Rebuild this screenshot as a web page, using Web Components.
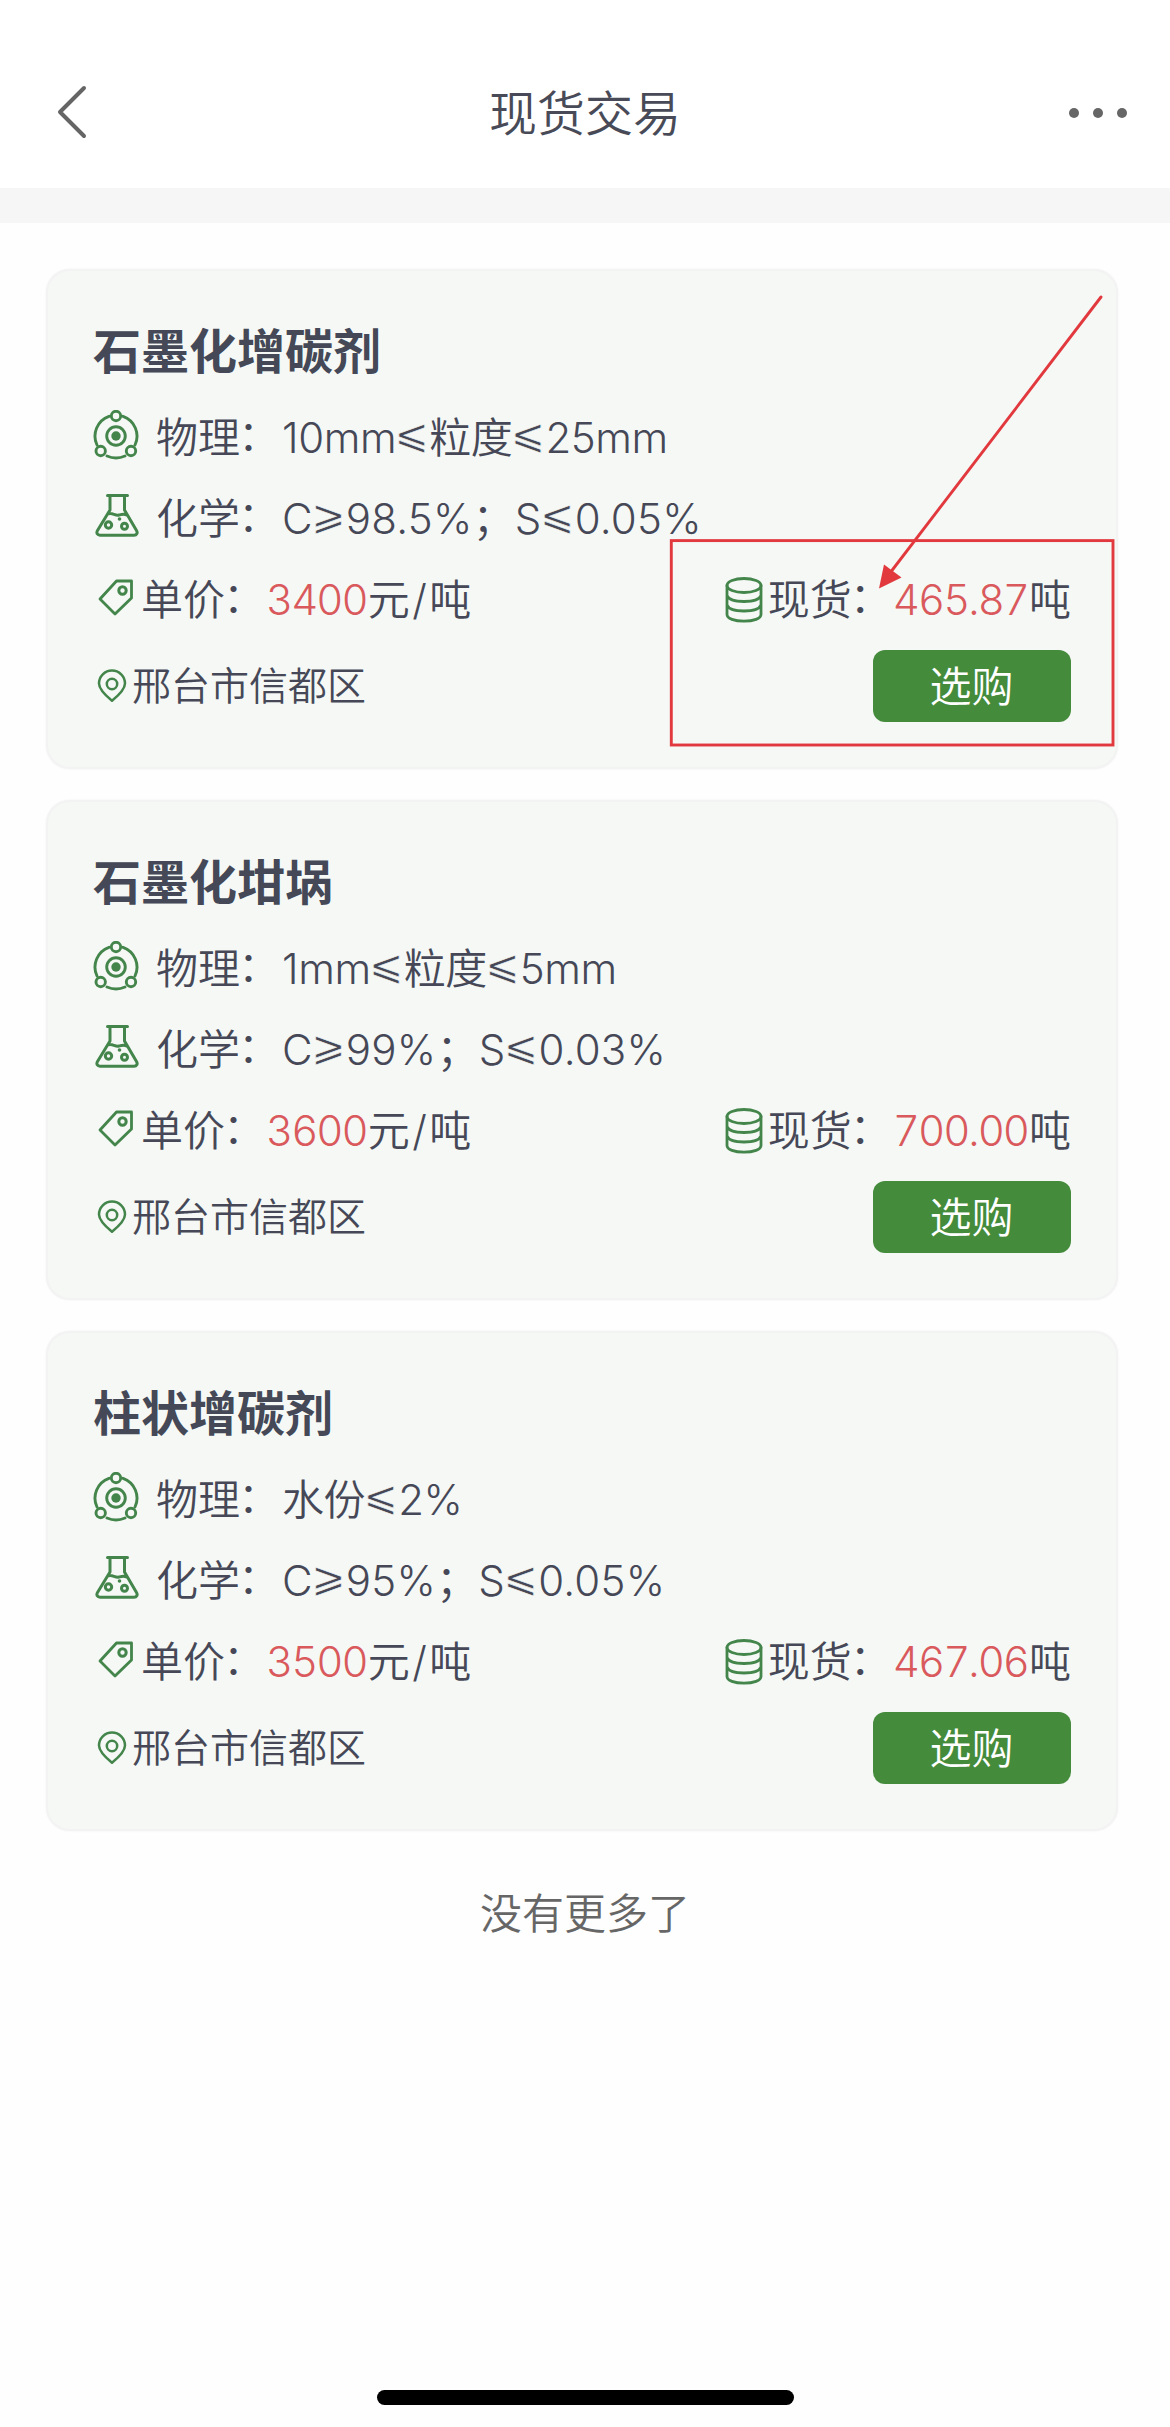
<!DOCTYPE html>
<html lang="zh-CN">
<head>
<meta charset="utf-8">
<title>现货交易</title>
<style>
html,body{margin:0;padding:0;background:#fefefe}
body{font-family:Inter,"Noto Sans CJK SC",sans-serif;font-weight:350;color:#464857}
</style>
</head>
<body>
<spot-page>
  <spot-header slot="header">现货交易</spot-header>
  <product-card price="3400" stock="465.87" place="邢台市信都区">
    <span slot="name">石墨化增碳剂</span>
    <span slot="physical">10mm<le-sign>⩽</le-sign>粒度<le-sign>⩽</le-sign>25mm</span>
    <span slot="chemical">C<le-sign>⩾</le-sign>98.5%；S<le-sign>⩽</le-sign>0.05%</span>
    <stock-callout slot="callout"></stock-callout>
  </product-card>
  <product-card price="3600" stock="700.00" place="邢台市信都区">
    <span slot="name">石墨化坩埚</span>
    <span slot="physical">1mm<le-sign>⩽</le-sign>粒度<le-sign>⩽</le-sign>5mm</span>
    <span slot="chemical">C<le-sign>⩾</le-sign>99%；S<le-sign>⩽</le-sign>0.03%</span>
  </product-card>
  <product-card price="3500" stock="467.06" place="邢台市信都区">
    <span slot="name">柱状增碳剂</span>
    <span slot="physical">水份<le-sign>⩽</le-sign>2%</span>
    <span slot="chemical">C<le-sign>⩾</le-sign>95%；S<le-sign>⩽</le-sign>0.05%</span>
  </product-card>
  <span slot="footer">没有更多了</span>
</spot-page>
<script>
const define = (name, html, setup) => customElements.define(name, class extends HTMLElement {
  constructor() {
    super();
    this.attachShadow({mode: 'open'}).innerHTML = html;
  }
  connectedCallback() { if (setup) setup(this, this.shadowRoot); }
});

const icons = {
  atom: [46, 50, `<g stroke-width="2.900"><path d="M16 6.300A21 21 0 0 0 4 35M30 6.300A21 21 0 0 1 42 35M14 46a22 22 0 0 0 18 0"/><circle cx="23" cy="6" r="4.700"/><circle cx="7.700" cy="41" r="4.700"/><circle cx="38" cy="41" r="4.700"/><circle cx="23" cy="26" r="9.300"/></g><circle cx="23" cy="26" r="4.700" fill="currentColor" stroke="none"/>`],
  flask: [44, 44, `<g stroke-width="3"><path d="M12.500 2.500h20M15 3v14L2.500 37.500c-1.500 2.500 0 4.700 2.500 4.700h34c2.700 0 4-2.200 2.500-4.700L29.500 17V3M13 21c4-2 7 2 11 1 3-.8 5-1.500 7.500 0"/><circle cx="13.500" cy="32" r="3.200"/><circle cx="29.500" cy="33.300" r="3"/></g><circle cx="24.500" cy="26" r="1.800" fill="currentColor" stroke="none"/>`],
  tag: [36, 37, `<path stroke-width="2.800" d="M2 20 18.500 2h15v17L17 35z"/><circle cx="24.500" cy="11.500" r="3.700" stroke-width="3"/>`],
  pin: [30, 34, `<path stroke-width="2.500" d="M15 31.800C8 26 2 20 2 14.500a13 13 0 0 1 26 0C28 20 22 26 15 31.800z"/><circle cx="15" cy="15" r="5.200" stroke-width="2.500"/>`],
  stack: [38, 46, `<g stroke-width="2.800"><ellipse cx="19" cy="8.500" rx="17" ry="7"/><path d="M2 8.500v29c0 4 7.500 6.700 17 6.700s17-2.700 17-6.700v-29M2 18.500c1.500 4 8 6 17 6s15.500-2 17-6M2 28c1.500 4 8 6 17 6s15.500-2 17-6"/></g>`]
};
define('line-icon', `<style>:host{display:block;flex:none;color:#43854a}svg{display:block;fill:none;stroke:currentColor;stroke-linecap:round;stroke-linejoin:round}</style><div></div>`, (el, root) => {
  const [w, h, body] = icons[el.getAttribute('name')];
  root.querySelector('div').innerHTML = `<svg width="${w}" height="${h}" viewBox="0 0 ${w} ${h}">${body}</svg>`;
});

define('le-sign', `<style>:host{display:inline-block;width:33px;text-align:center;font-family:"DejaVu Sans",sans-serif;font-weight:400;font-size:41px;line-height:1;letter-spacing:0;vertical-align:5px;text-indent:-2px;-webkit-text-stroke:.6px #f5f8f5}</style><slot></slot>`);

define('spot-header', `<style>
:host{display:block}
.bar{box-sizing:border-box;height:188px;padding:36px 42px 0 56px;display:grid;grid-template-columns:1fr auto 1fr;align-items:center;background:#fff}
.title{font-size:48px;line-height:70px;color:#484b57;margin:3px 14px 0 0}
.more{justify-self:end;display:flex;gap:14px;margin:2px 1px 0 0}
.more i{width:10px;height:10px;border-radius:50%;background:#666}
.band{height:35px;background:#f6f6f6}
svg{display:block}
</style>
<div class="bar"><svg width="32" height="54" viewBox="0 0 32 54" fill="none" stroke="#656565" stroke-width="4" stroke-linecap="round" stroke-linejoin="round"><path d="M28 3 4 27l24 24"/></svg>
<div class="title"><slot></slot></div><div class="more"><i></i><i></i><i></i></div></div><div class="band"></div>`);

define('buy-button', `<style>:host{display:block}
button{display:block;width:198px;height:72px;padding:0;border:0;border-radius:12px;background:#448b3c;color:#fff;font:inherit;font-size:42px;line-height:73px;text-indent:-1px}</style><button><slot></slot></button>`);

define('product-card', `<style>
:host{display:block;position:relative;box-sizing:border-box;width:1072px;height:500px;padding:36px 47px 0 47px;border-radius:24px;background:#f5f8f5;box-shadow:inset 0 0 0 2px #f3f3f3,0 0 2px rgba(70,70,80,.08);font-size:42px}
.name{height:92px;line-height:94px;font-size:48px;font-weight:700;color:#444857}
.row{height:81px;display:flex;align-items:center;line-height:81px;white-space:nowrap}
.last{height:92px;line-height:92px}
.right{margin-left:auto;display:flex;align-items:center}
.place{font-size:39px;padding-left:5px}
.key{width:126px}
.key i{font-style:normal;margin-left:-2px;vertical-align:2px;line-height:1}
.slash{margin:0 2.5px}
.val{letter-spacing:-.4px}
.chem{letter-spacing:.25px}
.num{color:#d9595c;letter-spacing:-2px;font-variant-numeric:tabular-nums;margin:0 1px 0 -1px}
.atom{margin:0 17px 6px 0}.flask{margin:0 17px 7px 2px}
.tag{margin:0 7px 5px 5px}.pin{margin-left:4px}.stack{margin-right:5px}
</style>
<div class="name"><slot name="name"></slot></div>
<div class="row"><line-icon name="atom" class="atom"></line-icon><span class="key">物理<i>：</i></span><span class="val"><slot name="physical"></slot></span></div>
<div class="row"><line-icon name="flask" class="flask"></line-icon><span class="key">化学<i>：</i></span><span class="chem"><slot name="chemical"></slot></span></div>
<div class="row"><line-icon name="tag" class="tag"></line-icon><span class="key">单价<i>：</i></span><span class="num price"></span><span>元<span class="slash">/</span>吨</span>
<div class="right"><line-icon name="stack" class="stack"></line-icon><span class="key">现货<i>：</i></span><span class="num stock"></span><span>吨</span></div></div>
<div class="row last"><line-icon name="pin" class="pin"></line-icon><span class="place"></span><buy-button class="right">选购</buy-button></div>
<slot name="callout"></slot>`, (el, root) => {
  for (const k of ['price', 'stock', 'place']) root.querySelector('.' + k).textContent = el.getAttribute(k);
});

define('stock-callout', `<style>:host{position:absolute;left:0;top:0;width:1072px;height:500px}svg{display:block}</style>
<svg width="1072" height="500" viewBox="46 269 1072 500" fill="none" stroke="#e2393e" stroke-width="2.900"><rect x="671.300" y="540.600" width="441.700" height="204.400"/><path stroke-linecap="round" d="M1101 297 890 573"/><path d="M879 588.500 884 564.500 901.500 577.500z" fill="#e2393e" stroke="none"/></svg>`);

define('spot-page', `<style>
:host{display:flex;flex-direction:column;width:1170px;height:2427px;background:#fefefe;overflow:hidden}
.list{display:flex;flex-direction:column;gap:31px;padding:46px 52px 0 46px}
.end{margin-top:43px;line-height:80px;text-align:center;font-size:42px;color:#666}
.home{width:417px;height:15px;border-radius:8px;background:#000;margin:auto auto 22px}
</style>
<slot name="header"></slot><div class="list"><slot></slot></div><div class="end"><slot name="footer"></slot></div><div class="home"></div>`);
</script>
</body>
</html>
